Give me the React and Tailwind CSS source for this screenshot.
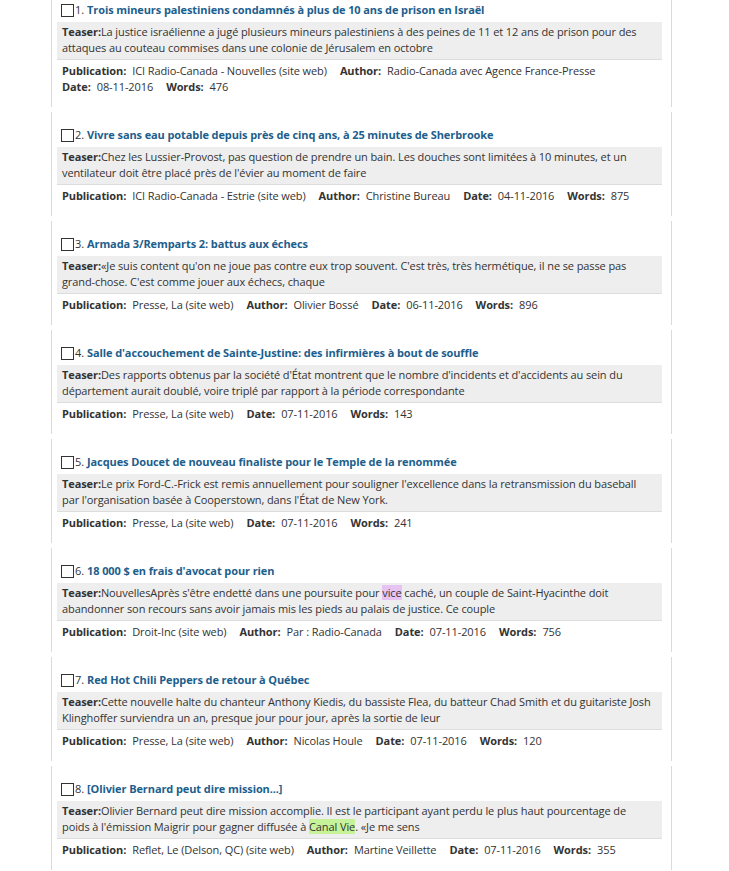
import React from "react";

const items = [
  {
    n: 1,
    title: "Trois mineurs palestiniens condamnés à plus de 10 ans de prison en Israël",
    teaser: [
      "La justice israélienne a jugé plusieurs mineurs palestiniens à des peines de 11 et 12 ans de prison pour des attaques au couteau commises dans une colonie de Jérusalem en octobre",
    ],
    publication: "ICI Radio-Canada - Nouvelles (site web)",
    author: "Radio-Canada avec Agence France-Presse",
    date: "08-11-2016",
    words: "476",
  },
  {
    n: 2,
    title: "Vivre sans eau potable depuis près de cinq ans, à 25 minutes de Sherbrooke",
    teaser: [
      "Chez les Lussier-Provost, pas question de prendre un bain. Les douches sont limitées à 10 minutes, et un ventilateur doit être placé près de l'évier au moment de faire",
    ],
    publication: "ICI Radio-Canada - Estrie (site web)",
    author: "Christine Bureau",
    date: "04-11-2016",
    words: "875",
  },
  {
    n: 3,
    title: "Armada 3/Remparts 2: battus aux échecs",
    teaser: [
      "«Je suis content qu'on ne joue pas contre eux trop souvent. C'est très, très hermétique, il ne se passe pas grand-chose. C'est comme jouer aux échecs, chaque",
    ],
    publication: "Presse, La (site web)",
    author: "Olivier Bossé",
    date: "06-11-2016",
    words: "896",
  },
  {
    n: 4,
    title: "Salle d'accouchement de Sainte-Justine: des infirmières à bout de souffle",
    teaser: [
      "Des rapports obtenus par la société d'État montrent que le nombre d'incidents et d'accidents au sein du département aurait doublé, voire triplé par rapport à la période correspondante",
    ],
    publication: "Presse, La (site web)",
    date: "07-11-2016",
    words: "143",
  },
  {
    n: 5,
    title: "Jacques Doucet de nouveau finaliste pour le Temple de la renommée",
    teaser: [
      "Le prix Ford-C.-Frick est remis annuellement pour souligner l'excellence dans la retransmission du baseball par l'organisation basée à Cooperstown, dans l'État de New York.",
    ],
    publication: "Presse, La (site web)",
    date: "07-11-2016",
    words: "241",
  },
  {
    n: 6,
    title: "18 000 $ en frais d'avocat pour rien",
    teaser: [
      "NouvellesAprès s'être endetté dans une poursuite pour ",
      { hl: "vice", c: "bg-[#e6c3f2]" },
      " caché, un couple de Saint-Hyacinthe doit abandonner son recours sans avoir jamais mis les pieds au palais de justice. Ce couple",
    ],
    publication: "Droit-Inc (site web)",
    author: "Par : Radio-Canada",
    date: "07-11-2016",
    words: "756",
  },
  {
    n: 7,
    title: "Red Hot Chili Peppers de retour à Québec",
    teaser: [
      "Cette nouvelle halte du chanteur Anthony Kiedis, du bassiste Flea, du batteur Chad Smith et du guitariste Josh Klinghoffer surviendra un an, presque jour pour jour, après la sortie de leur",
    ],
    publication: "Presse, La (site web)",
    author: "Nicolas Houle",
    date: "07-11-2016",
    words: "120",
  },
  {
    n: 8,
    title: "[Olivier Bernard peut dire mission...]",
    teaser: [
      "Olivier Bernard peut dire mission accomplie. Il est le participant ayant perdu le plus haut pourcentage de poids à l'émission Maigrir pour gagner diffusée à ",
      { hl: "Canal Vie", c: "bg-[#c6f29a]" },
      ". «Je me sens",
    ],
    publication: "Reflet, Le (Delson, QC) (site web)",
    author: "Martine Veillette",
    date: "07-11-2016",
    words: "355",
  },
];

function Meta({ label, value }) {
  return (
    <span className="mr-[13px] inline-block">
      <b className="font-bold">{label}:</b>
      <span className="ml-[6px]">{value}</span>
    </span>
  );
}

function Item({ item }) {
  return (
    <div className="mb-[5px] border-x border-[#dadada] pb-[12px] pl-[5px] pr-[9px] pt-[15px]">
      <div className="flex h-4 items-center pl-1">
        <span className="mr-px inline-block h-[13px] w-[13px] border border-[#333] bg-white"></span>
        <span>{item.n}.</span>
        <a className="ml-[3px] font-bold text-[#1d5e8c]">{item.title}</a>
      </div>
      <div className="mt-1 border-b border-[#dddddd] bg-[#eeeeee] pb-[3px] pl-[5px] pr-[9px] pt-[2px]">
        <b className="font-bold">Teaser:</b>
        {item.teaser.map((t, i) =>
          typeof t === "string" ? (
            <span key={i}>{t}</span>
          ) : (
            <span key={i} className={t.c}>
              {t.hl}
            </span>
          )
        )}
      </div>
      <div className="mt-[3px] pl-[5px]">
        <Meta label="Publication" value={item.publication} />
        {item.author && <Meta label="Author" value={item.author} />}
        <Meta label="Date" value={item.date} />
        <Meta label="Words" value={item.words} />
      </div>
    </div>
  );
}

export default function App() {
  return (
    <div className="h-[871px] overflow-hidden bg-white text-[#333] [font-family:'Open_Sans',sans-serif] text-[11px] leading-4 tracking-[-0.1px]">
      <div className="ml-[51px] mt-[-13px] w-[621px]">
        {items.map((item) => (
          <Item key={item.n} item={item} />
        ))}
      </div>
    </div>
  );
}
